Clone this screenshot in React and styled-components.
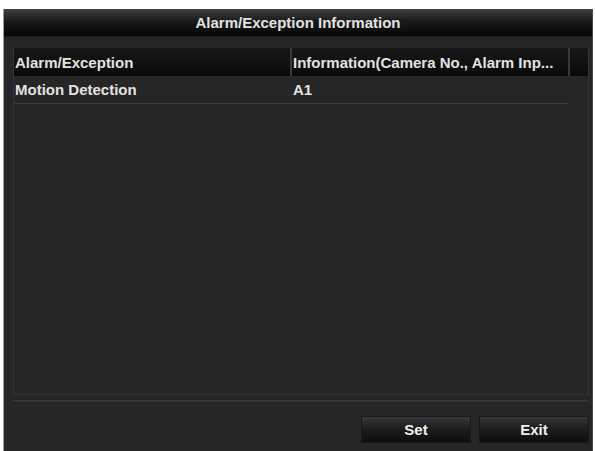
import styled, { createGlobalStyle } from 'styled-components';

const GlobalStyle = createGlobalStyle`
  body {
    margin: 0;
    background: #ffffff;
    font-family: 'Liberation Sans', Arial, sans-serif;
  }
`;

const COLUMNS = ['Alarm/Exception', 'Information(Camera No., Alarm Inp...'];
const ROWS = [['Motion Detection', 'A1']];

const App = () => {
  return (
    <>
      <GlobalStyle />
      <Window>
        <TitleBar>Alarm/Exception Information</TitleBar>
        <Body>
          <TableFrame>
            <HeaderRow>
              <HeaderCell $width={276}>{COLUMNS[0]}</HeaderCell>
              <HeaderCell $width={278} $divider>
                {COLUMNS[1]}
              </HeaderCell>
              <HeaderCell $width={20} $divider />
            </HeaderRow>
            {ROWS.map(([type, info]) => (
              <Row key={type}>
                <Cell $width={276}>{type}</Cell>
                <Cell $width={278}>{info}</Cell>
              </Row>
            ))}
          </TableFrame>
          <Separator />
          <ButtonBar>
            <Button>Set</Button>
            <Button>Exit</Button>
          </ButtonBar>
        </Body>
      </Window>
    </>
  );
};

export default App;

const Window = styled.div`
  margin: 9px 2px 0 3px;
  height: 442px;
  display: flex;
  flex-direction: column;
  border-left: 1px solid #9a9a9a;
  border-right: 1px solid #4a4a4a;
  background-color: #262626;
  color: #e2e2e2;
  font-size: 15px;
  font-weight: bold;
`;

const TitleBar = styled.div`
  height: 27px;
  display: flex;
  align-items: center;
  justify-content: center;
  background: linear-gradient(#404040, #1a1a1a 45%, #060606);
  border-bottom: 1px solid #1c1c1c;
`;

const Body = styled.div`
  flex: 1;
  display: flex;
  flex-direction: column;
  padding: 11px 3px 0 9px;
`;

const TableFrame = styled.div`
  height: 347px;
  border: 1px solid #333333;
  border-top: none;
  box-sizing: border-box;
`;

const HeaderRow = styled.div`
  display: flex;
  height: 28px;
  background: linear-gradient(#181818, #0a0a0a);
`;

const HeaderCell = styled.div`
  width: ${({ $width }) => $width}px;
  display: flex;
  align-items: center;
  padding-left: 1px;
  box-sizing: border-box;
  white-space: nowrap;
  overflow: hidden;
  border-left: ${({ $divider }) => ($divider ? '2px solid #3a3a3a' : 'none')};
`;

const Row = styled.div`
  display: flex;
  height: 28px;
  margin-right: 20px;
  border-bottom: 1px solid #3c3c3c;
  box-sizing: border-box;
`;

const Cell = styled.div`
  width: ${({ $width }) => $width}px;
  display: flex;
  align-items: center;
  padding-left: 1px;
  box-sizing: border-box;
  white-space: nowrap;

  & + & {
    padding-left: 3px;
  }
`;

const Separator = styled.div`
  margin-top: 5px;
  height: 2px;
  background-color: #363636;
  border-bottom: 1px solid #202020;
`;

const ButtonBar = styled.div`
  display: flex;
  justify-content: flex-end;
  gap: 8px;
  padding-top: 13px;
`;

const Button = styled.div`
  width: 110px;
  height: 27px;
  display: flex;
  align-items: center;
  justify-content: center;
  background: linear-gradient(#363636, #1c1c1c 50%, #0e0e0e);
  border: 1px solid #1a1a1a;
  box-sizing: border-box;
  color: #f0f0f0;
`;
